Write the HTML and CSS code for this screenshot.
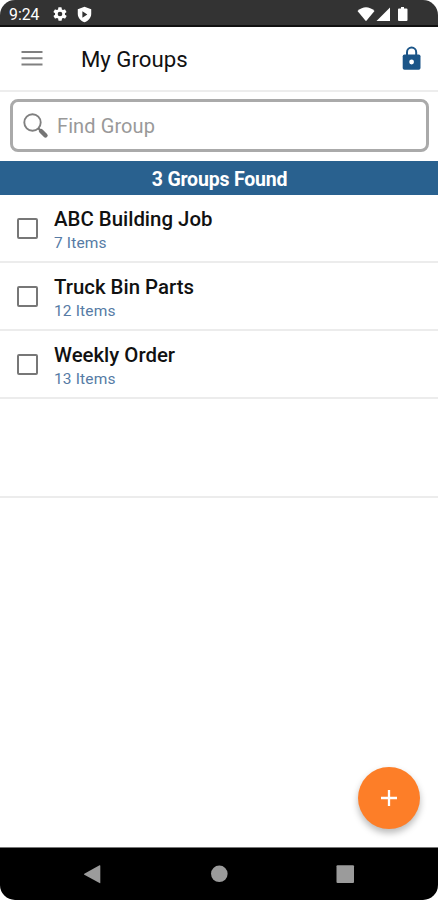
FILE: index.html
```html
<!DOCTYPE html>
<html lang="en">
<head>
<meta charset="utf-8">
<title>My Groups</title>
<link rel="stylesheet" href="styles.css">
</head>
<body>
<div class="phone">
  <div class="status">
    <span class="clock">9:24</span>
    <svg class="gear" width="16" height="16" viewBox="0 0 24 24"><path fill="#fff" fill-rule="evenodd" d="M19.4 13a7.500 7.500 0 0 0 0-2l2.100-1.600a.5.5 0 0 0 .1-.6l-2-3.500a.5.5 0 0 0-.6-.2l-2.500 1a7.300 7.300 0 0 0-1.700-1l-.4-2.600A.5.5 0 0 0 14 2h-4a.5.5 0 0 0-.5.400l-.4 2.700a7.700 7.700 0 0 0-1.700 1l-2.500-1a.5.5 0 0 0-.6.200l-2 3.500a.5.5 0 0 0 .1.600L4.600 11a8 8 0 0 0 0 2l-2.100 1.600a.5.5 0 0 0-.1.600l2 3.500c.1.200.4.300.6.200l2.500-1c.5.400 1.100.7 1.700 1l.4 2.600c0 .3.200.5.500.5h4c.2 0 .5-.2.500-.5l.4-2.600a7.300 7.300 0 0 0 1.700-1l2.500 1c.2.100.5 0 .6-.2l2-3.500a.5.5 0 0 0-.1-.6zM12 15.500a3.500 3.500 0 1 1 0-7 3.500 3.500 0 0 1 0 7z"/></svg>
    <svg class="shield" width="17" height="17" viewBox="0 0 24 24"><path fill="#fff" fill-rule="evenodd" d="M12 1 2.500 4.500V11c0 5.500 4 10.500 9.500 12 5.500-1.500 9.500-6.500 9.500-12V4.500zM9 7.500l7 4.500-7 4.500z"/></svg>
    <svg class="signals" width="54" height="18" viewBox="0 0 54 18"><g fill="#fff"><path d="M1.500 6Q10-1.500 18.500 6L10 16.200z"/><path d="M34 2.500V16H20.500z"/><path d="M43 3.500h2V2h3v1.500h2.500q1 0 1 1V15q0 1-1 1H43q-1 0-1-1V4.500q0-1 1-1z"/></g></svg>
  </div>
  <header class="bar">
    <svg class="menu" width="22" height="18" viewBox="0 0 22 18"><path d="M.5 2h21M.5 8.200h21M.5 14.500h21" stroke="#808080" stroke-width="2"/></svg>
    <h1>My Groups</h1>
    <svg class="lock" width="19" height="26" viewBox="0 0 19 26"><path d="M5 10V7.200a4.600 4.600 0 0 1 9.200 0V10" fill="none" stroke="#1b5588" stroke-width="2"/><rect x=".7" y="9.500" width="17.800" height="15.300" rx="1.800" fill="#1b5588"/><circle cx="9.600" cy="17" r="2.400" fill="#fff"/></svg>
  </header>
  <div class="search">
    <svg width="26" height="26" viewBox="0 0 26 26"><circle cx="9.500" cy="9.500" r="8.200" fill="none" stroke="#808080" stroke-width="1.900"/><path d="m15.300 15.300 3 3" stroke="#757575" stroke-width="2"/><path d="m18 18 4.500 4.500" stroke="#757575" stroke-width="4.400" stroke-linecap="round"/></svg>
    <span>Find Group</span>
  </div>
  <div class="found">3 Groups Found</div>
  <ul class="list">
    <li><i class="box"></i><div><b>ABC Building Job</b><small>7 Items</small></div></li>
    <li><i class="box"></i><div><b>Truck Bin Parts</b><small>12 Items</small></div></li>
    <li><i class="box"></i><div><b>Weekly Order</b><small>13 Items</small></div></li>
    <li class="blank"></li>
  </ul>
  <div class="fab"><svg width="18" height="18" viewBox="0 0 18 18"><path d="M9 1v16M1 9h16" stroke="#fff" stroke-width="2.300"/></svg></div>
  <nav class="nav">
    <svg width="438" height="52" viewBox="0 0 438 52"><g fill="#9b9b9b"><path d="M100.300 17.700v17q0 .8-.8.400L84.300 26.700q-.8-.5 0-1l15.200-8.400q.8-.4.800.4z"/><circle cx="219.300" cy="25.800" r="8.300"/><rect x="336.500" y="17.200" width="17.500" height="17.700" rx="1"/></g></svg>
  </nav>
</div>
</body>
</html>
```

FILE: styles.css
```css
* { box-sizing: border-box; }
body { margin: 0; background: #fff; font-family: Roboto, sans-serif; color: #111; }
svg { display: block; flex: none; }
.phone { position: relative; width: 438px; height: 900px; display: flex; flex-direction: column; background: #fff; border-radius: 15px; overflow: hidden; }
.status { height: 27px; flex: none; display: flex; align-items: center; background: #333; border-bottom: 2px solid #111; padding: 3px 28px 0 9px; color: #fff; }
.clock { font-size: 15.800px; width: 43px; }
.shield { margin-left: 8px; }
.signals { margin-left: auto; }
.bar { height: 65px; flex: none; display: flex; align-items: center; padding: 0 17px 0 21px; border-bottom: 2px solid #ededed; }
.menu { margin-right: 38px; }
h1 { margin: 0; font-size: 22.200px; line-height: 28px; font-weight: 400; }
.lock { margin-left: auto; margin-top: -2px; }
.search { height: 53px; flex: none; margin: 7px 9px 9px 10px; border: 3px solid #aaa; border-radius: 8px; display: flex; align-items: center; padding-left: 10px; color: #999; font-size: 20px; letter-spacing: .1px; }
.search span { margin-left: 8px; }
.found { height: 34px; flex: none; background: #29618f; color: #fff; text-align: center; font-size: 19.500px; letter-spacing: -.2px; line-height: 37px; padding-left: 1px; font-weight: 700; }
.list { list-style: none; margin: 0; padding: 0; flex: 1; }
.list li { height: 68px; border-bottom: 2px solid #ececec; display: flex; padding: 11px 0 0 17px; }
.list .blank { height: 99px; }
.box { width: 21px; height: 21px; border: 2px solid #777; border-radius: 2px; margin: 12px 16px 0 0; }
b, small { display: block; }
b { font-size: 20.400px; line-height: 27px; font-weight: 500; }
small { font-size: 15.500px; line-height: 21px; color: #567ba5; letter-spacing: .15px; }
.fab { position: absolute; left: 358px; top: 767px; width: 62px; height: 62px; border-radius: 50%; background: #fd7e28; display: flex; align-items: center; justify-content: center; box-shadow: 0 4px 7px rgba(0,0,0,.28); }
.nav { height: 53px; flex: none; background: #000; border-top: 1px solid #777; }
```
